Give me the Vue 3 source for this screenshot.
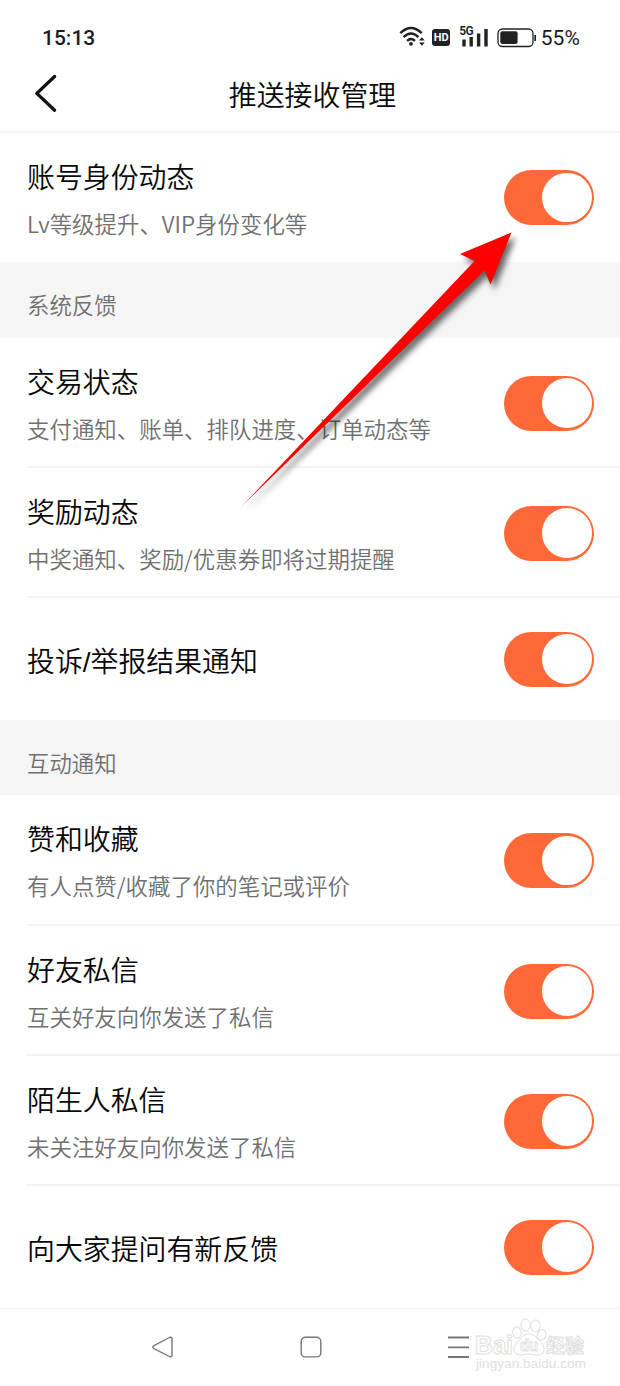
<script setup>
const groups = [
  {
    rows: [{ title: '账号身份动态', sub: 'Lv等级提升、VIP身份变化等', height: 129 }],
  },
  {
    name: '系统反馈',
    height: 76,
    rows: [
      { title: '交易状态', sub: '支付通知、账单、排队进度、订单动态等', height: 130, line: true },
      { title: '奖励动态', sub: '中奖通知、奖励/优惠券即将过期提醒', height: 130, line: true },
      { title: '投诉/举报结果通知', height: 122 },
    ],
  },
  {
    name: '互动通知',
    height: 75,
    rows: [
      { title: '赞和收藏', sub: '有人点赞/收藏了你的笔记或评价', height: 131, line: true },
      { title: '好友私信', sub: '互关好友向你发送了私信', height: 130, line: true },
      { title: '陌生人私信', sub: '未关注好友向你发送了私信', height: 130, line: true },
      { title: '向大家提问有新反馈', height: 122 },
    ],
  },
]
</script>

<template>
  <div class="screen">
    <div class="status">
      <span class="time">15:13</span>
      <div class="indicators">
        <svg class="wifi" width="27" height="22" viewBox="0 0 27 22">
          <g fill="none" stroke="#222" stroke-width="2.4">
            <path d="M1.3 7.2Q12 -3 22.7 7.2" />
            <path d="M4.6 11.2Q12 4 19.4 11.2" />
            <path d="M8 14.8Q12 11 16 14.8" />
          </g>
          <circle cx="12" cy="17.8" r="1.9" fill="#222" />
          <path d="M20 14.6L22.9 11.2L25.8 14.6ZM20 16.4L22.9 19.8L25.8 16.4Z" fill="#222" />
        </svg>
        <span class="hd">HD</span>
        <div class="cell">
          <svg width="29" height="22" viewBox="0 0 29 22">
            <path d="M3 13.5V20.5M10.2 11V20.5M17.6 7.5V20.5M25 3V20.5" stroke="#222" stroke-width="3.4" />
          </svg>
          <span class="net">5G</span>
        </div>
        <svg class="battery" width="40" height="20" viewBox="0 0 40 20">
          <rect x="1" y="1" width="35" height="17.5" rx="4.5" fill="none" stroke="#222" stroke-width="1.3" />
          <rect x="3.3" y="3.3" width="17.3" height="12.8" rx="2" fill="#222" />
          <path d="M38.2 7V13" stroke="#222" stroke-width="1.7" />
        </svg>
        <span class="percent">55%</span>
      </div>
    </div>

    <header class="header">
      <svg class="back" width="26" height="40" viewBox="0 0 26 40">
        <path d="M21.6 3.5L3.8 20.4L21.6 37.2" fill="none" stroke="#111" stroke-width="3.3" stroke-linecap="round" stroke-linejoin="round" />
      </svg>
      <h1>推送接收管理</h1>
    </header>

    <main>
      <section v-for="(group, i) in groups" :key="i">
        <div v-if="group.name" class="group-name" :style="{ height: group.height + 'px' }">{{ group.name }}</div>
        <div
          v-for="row in group.rows"
          :key="row.title"
          class="row"
          :class="{ line: row.line }"
          :style="{ height: row.height + 'px' }"
        >
          <div class="texts" :class="{ single: !row.sub }">
            <div class="title">{{ row.title }}</div>
            <div v-if="row.sub" class="sub">{{ row.sub }}</div>
          </div>
          <span class="toggle"><i class="knob"></i></span>
        </div>
      </section>
    </main>

    <footer class="nav">
      <svg width="620" height="77" viewBox="0 0 620 77">
        <g fill="none" stroke="#777" stroke-width="1.4" stroke-linejoin="round">
          <path d="M154 36.6L169.4 28.5Q172 27.5 172 30V46Q172 48.5 169.4 47.5L154 39.6Q151.5 38.1 154 36.6Z" />
          <rect x="301.2" y="28.3" width="19.6" height="19.6" rx="4.2" />
          <path d="M448 28.5H469M448 38.3H469M448 48H469" stroke-width="1.8" />
        </g>
        <g fill="#fff" stroke="#dedede" stroke-width="1">
          <ellipse cx="517" cy="23.5" rx="4.3" ry="5.6" transform="rotate(-12 517 23.5)" />
          <ellipse cx="525.5" cy="16" rx="4.6" ry="6" />
          <ellipse cx="535.5" cy="17" rx="4.5" ry="6" transform="rotate(8 535.5 17)" />
          <ellipse cx="541.5" cy="26" rx="4.3" ry="5.6" transform="rotate(20 541.5 26)" />
          <path d="M529 25C523 25 521 30 517.5 33C512 38 513 46 520 46C524 46 526 45 529 45C532 45 534 46 538 46C545 46 546 38 540.5 33C537 30 535 25 529 25Z" />
        </g>
        <g class="mark">
          <text class="brand" x="475" y="45" textLength="38" lengthAdjust="spacingAndGlyphs">Bai</text>
          <text class="du" x="520" y="42" textLength="18" lengthAdjust="spacingAndGlyphs">du</text>
          <text class="cn" x="546" y="43.5" textLength="38" lengthAdjust="spacingAndGlyphs">经验</text>
          <text class="site" x="476" y="59" textLength="110" lengthAdjust="spacingAndGlyphs">jingyan.baidu.com</text>
        </g>
      </svg>
    </footer>

    <svg class="arrow" width="300" height="300" viewBox="0 0 300 300">
      <path d="M12 286L244.5 41L230 34L281.5 12.5L260.5 64.5L254.5 50.5Z" fill="#f00" />
    </svg>
  </div>
</template>

<style>
body {
  background: #fff;
}
</style>

<style scoped>
.screen {
  position: relative;
  width: 620px;
  height: 1386px;
  overflow: hidden;
  display: flex;
  flex-direction: column;
  background: #fff;
  color: #080808;
  font-family: 'Noto Sans CJK SC', sans-serif;
}
.status {
  box-sizing: border-box;
  height: 60px;
  padding: 15px 40px 0 42px;
  display: flex;
  align-items: center;
  justify-content: space-between;
  font-family: Roboto, sans-serif;
  color: #1b1b1b;
}
.time {
  font-size: 21px;
  font-weight: 500;
}
.indicators {
  display: flex;
  align-items: center;
}
.wifi {
  margin-top: -1px;
}
.hd {
  width: 18px;
  height: 17px;
  margin-left: 6px;
  border-radius: 3px;
  background: #222;
  color: #fff;
  font-size: 11px;
  line-height: 18px;
  font-weight: 700;
  text-align: center;
}
.cell {
  position: relative;
  display: flex;
  margin: -2px 0 0 11px;
  width: 35.5px;
}
.net {
  position: absolute;
  left: -2px;
  top: 0;
  font-size: 12px;
  line-height: 11px;
  letter-spacing: -0.5px;
  font-weight: 600;
  background: #fff;
}
.percent {
  margin-left: 4px;
  font-size: 21px;
  letter-spacing: 0.1px;
}
.header {
  box-sizing: border-box;
  height: 73px;
  border-bottom: 2px solid #f4f4f4;
  display: grid;
  grid-template-columns: 60px 1fr 60px;
  align-items: center;
}
.back {
  margin: -5px 0 0 33px;
}
h1 {
  margin: -3px 0 0;
  padding-left: 5px;
  text-align: center;
  font-size: 27.9px;
  line-height: 40px;
  font-weight: 350;
}
.group-name {
  box-sizing: border-box;
  padding: 8px 0 0 27px;
  display: flex;
  align-items: center;
  background: #f5f5f5;
  color: #707070;
  font-size: 22.4px;
  font-weight: 350;
}
.row {
  box-sizing: border-box;
  margin-left: 27px;
  padding-right: 26px;
  display: flex;
  align-items: center;
  justify-content: space-between;
}
.line {
  border-bottom: 2px solid #f4f4f4;
}
.texts {
  display: flex;
  flex-direction: column;
  gap: 6px;
  padding-top: 3px;
  white-space: nowrap;
}
.single {
  padding-top: 7px;
}
.title {
  font-family: 'Liberation Sans', 'Noto Sans CJK SC', sans-serif;
  font-size: 27.9px;
  line-height: 42px;
  font-weight: 350;
}
.sub {
  font-size: 22.45px;
  line-height: 34px;
  font-weight: 350;
  color: #707070;
}
.toggle {
  box-sizing: border-box;
  width: 90px;
  height: 55px;
  padding-right: 2.5px;
  border-radius: 28px;
  background: #ff6837;
  display: flex;
  align-items: center;
  justify-content: flex-end;
}
.line .toggle {
  margin-top: 2px;
}
.knob {
  width: 49.5px;
  height: 49.5px;
  border-radius: 50%;
  background: #fff;
}
.nav {
  box-sizing: border-box;
  flex: 1;
  border-top: 1px solid #f3f3f3;
}
.nav svg {
  display: block;
}
.mark text {
  fill: #fff;
  stroke: #dedede;
  stroke-width: 1px;
  font-family: 'Liberation Sans', 'Noto Sans CJK SC', sans-serif;
  font-weight: 700;
}
.mark .brand {
  font-size: 26px;
}
.mark .du {
  font-size: 17px;
}
.mark .cn {
  font-size: 19px;
}
.mark .site {
  font-size: 12.5px;
  font-weight: 400;
  fill: #e0e0e0;
  stroke: none;
}
.arrow {
  position: absolute;
  left: 230px;
  top: 220px;
  overflow: visible;
  filter: drop-shadow(4px 5px 3px rgba(0, 0, 0, 0.6));
}
</style>
